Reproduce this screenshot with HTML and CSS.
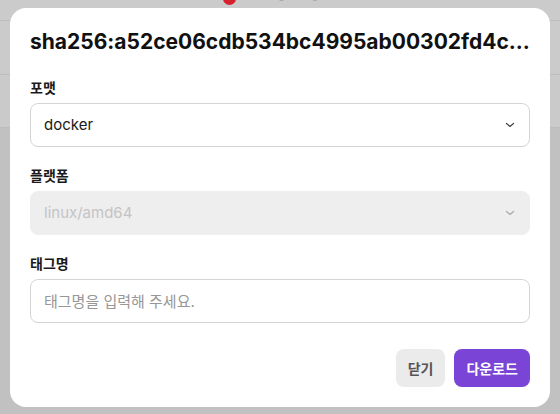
FILE: index.html
```html
<!DOCTYPE html>
<html lang="ko">
<head>
<meta charset="utf-8">
<title>다운로드</title>
<link rel="stylesheet" href="styles.css">
</head>
<body>
<div class="page">
  <div class="page-top">
    <div class="status"><span class="dot"></span><span class="status-text">Pulling image</span></div>
  </div>
  <div class="page-row"></div>
  <div class="page-row"></div>
  <div class="page-body"></div>
</div>

<div class="overlay">
  <div class="dialog" role="dialog">
    <h2 class="title">sha256:a52ce06cdb534bc4995ab00302fd4c...</h2>
    <div class="fields">
      <div class="field">
        <label class="label">포맷</label>
        <div class="select">
          <span class="value">docker</span>
          <svg class="chev" width="10" height="6" viewBox="0 0 10 6"><path d="M1.5 1.5 L5 4.5 L8.5 1.5" fill="none" stroke="currentColor" stroke-width="1.2" stroke-linecap="round" stroke-linejoin="round"/></svg>
        </div>
      </div>
      <div class="field">
        <label class="label">플랫폼</label>
        <div class="select disabled">
          <span class="value">linux/amd64</span>
          <svg class="chev" width="10" height="6" viewBox="0 0 10 6"><path d="M1.5 1.5 L5 4.5 L8.5 1.5" fill="none" stroke="currentColor" stroke-width="1.2" stroke-linecap="round" stroke-linejoin="round"/></svg>
        </div>
      </div>
      <div class="field">
        <label class="label">태그명</label>
        <div class="input"><span class="placeholder">태그명을 입력해 주세요.</span></div>
      </div>
    </div>
    <div class="footer">
      <button class="btn btn-close">닫기</button>
      <button class="btn btn-primary">다운로드</button>
    </div>
  </div>
</div>
</body>
</html>
```

FILE: styles.css
```css
* { box-sizing: border-box; }
html, body {
  margin: 0;
  padding: 0;
  width: 560px;
  height: 414px;
  overflow: hidden;
  font-family: Inter, "Noto Sans CJK KR", sans-serif;
}
.page {
  width: 560px;
  height: 414px;
  display: flex;
  flex-direction: column;
  background: #c1c1c2;
}
.page-top {
  height: 21px;
  background: #cbcbcb;
  border-bottom: 1px solid #bdbdbd;
  display: flex;
  justify-content: center;
  align-items: flex-end;
  overflow: hidden;
}
.status {
  display: flex;
  align-items: center;
  gap: 8px;
  margin-bottom: 14px;
  margin-left: -10px;
}
.dot {
  width: 13px;
  height: 13px;
  border-radius: 50%;
  background: #d5202e;
}
.status-text {
  font-size: 13px;
  color: #a8a8a8;
  position: relative;
  top: -5px;
}
.page-row {
  height: 54px;
  background: #cbcbcb;
  border-bottom: 1px solid #bdbdbd;
}
.page-row + .page-row {
  height: 53px;
  background: #cacaca;
}
.page-body {
  flex: 1;
  background: #c1c1c2;
}

.overlay {
  position: absolute;
  inset: 0;
  display: flex;
  align-items: center;
  justify-content: center;
}
.dialog {
  width: 540px;
  background: #ffffff;
  border-radius: 16px;
  padding: 20px;
  display: flex;
  flex-direction: column;
}
.title {
  margin: 0;
  font-size: 21px;
  line-height: 28px;
  font-weight: 700;
  color: #111111;
  white-space: nowrap;
  overflow: hidden;
  text-overflow: ellipsis;
}
.fields {
  margin-top: 22px;
  display: flex;
  flex-direction: column;
  gap: 19px;
}
.field {
  display: flex;
  flex-direction: column;
  gap: 6px;
}
.label {
  font-size: 14px;
  line-height: 19px;
  font-weight: 600;
  color: #1a1a1a;
}
.select, .input {
  height: 44px;
  border: 1px solid #d4d4d4;
  border-radius: 8px;
  padding: 0 13px;
  display: flex;
  align-items: center;
  justify-content: space-between;
  background: #ffffff;
}
.value {
  font-size: 15px;
  color: #1a1a1a;
}
.chev {
  color: #444444;
  margin-right: 1px;
}
.select.disabled {
  background: #eeeeee;
  border-color: #eeeeee;
}
.select.disabled .value {
  color: #c4c4c4;
}
.select.disabled .chev {
  color: #a8a8a8;
}
.placeholder {
  font-size: 15px;
  color: #979797;
}
.footer {
  margin-top: 26px;
  display: flex;
  justify-content: flex-end;
  gap: 9px;
}
.btn {
  height: 38px;
  border: none;
  border-radius: 8px;
  padding: 0 12px;
  font-family: Inter, "Noto Sans CJK KR", sans-serif;
  font-size: 14px;
  font-weight: 700;
}
.btn-close {
  background: #ebebeb;
  color: #555555;
}
.btn-primary {
  background: #7a44d6;
  color: #ffffff;
}
```
